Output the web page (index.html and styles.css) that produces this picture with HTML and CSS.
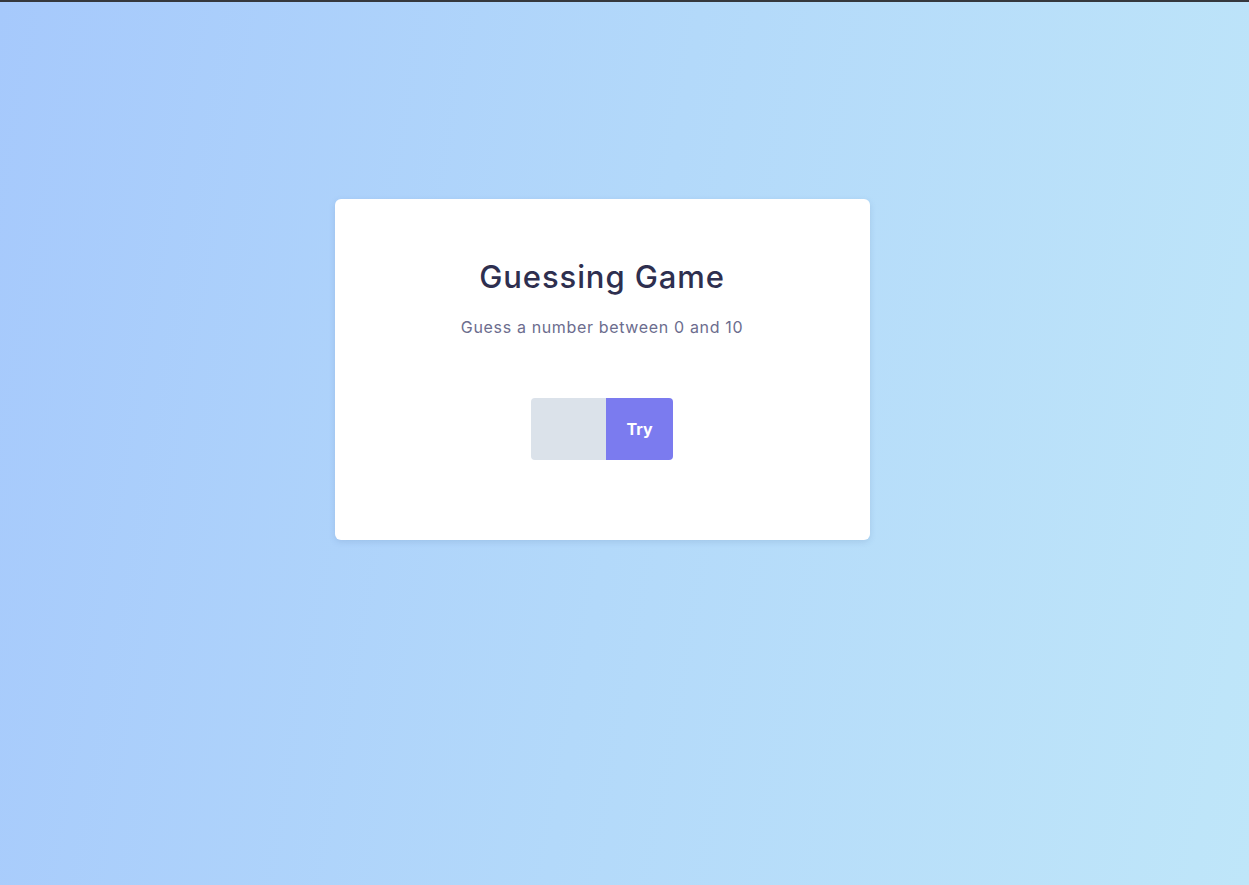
FILE: index.html
```html
<!DOCTYPE html>
<html lang="en">
<head>
<meta charset="utf-8">
<title>Guessing Game</title>
<link rel="stylesheet" href="styles.css">
</head>
<body>
<main class="page">
  <section class="card">
    <h1 class="title">Guessing Game</h1>
    <p class="subtitle">Guess a number between 0 and 10</p>
    <form class="guess">
      <input class="guess-input" type="text" aria-label="Your guess">
      <button class="guess-btn" type="button">Try</button>
    </form>
  </section>
</main>
</body>
</html>
```
FILE: styles.css
```css
html, body {
  margin: 0;
  padding: 0;
  height: 100%;
}
body {
  border-top: 2px solid #35383d;
  box-sizing: border-box;
  background: linear-gradient(100deg, #a6c9fc 0%, #b3d9fa 50%, #bfe6f9 100%);
  font-family: Inter, "Open Sans", sans-serif;
}
.page {
  display: flex;
  justify-content: center;
  padding: 197px 44px 0 0;
}
.card {
  width: 535px;
  box-sizing: border-box;
  background: #fff;
  border-radius: 6px;
  box-shadow: 0 2px 6px rgba(80, 110, 160, 0.18);
  padding: 60px 21px 80px 20px;
  display: flex;
  flex-direction: column;
  align-items: center;
}
.title {
  margin: 0;
  font-family: Inter, sans-serif;
  font-weight: 500;
  font-size: 31px;
  line-height: 36px;
  letter-spacing: 0.9px;
  color: #2e2f4f;
}
.subtitle {
  margin: 22px 0 0;
  font-size: 16px;
  line-height: 20px;
  letter-spacing: 0.65px;
  color: #6c6d8e;
}
.guess {
  margin-top: 61px;
  display: flex;
}
.guess-input {
  width: 75px;
  height: 62px;
  box-sizing: border-box;
  border: none;
  border-radius: 4px 0 0 4px;
  background: #dbe2ea;
  outline: none;
  padding: 0 10px;
}
.guess-btn {
  width: 67px;
  height: 62px;
  border: none;
  border-radius: 0 4px 4px 0;
  background: #7b7bef;
  color: #fff;
  font-family: Inter, sans-serif;
  font-weight: 700;
  font-size: 16px;
  cursor: pointer;
}
```
